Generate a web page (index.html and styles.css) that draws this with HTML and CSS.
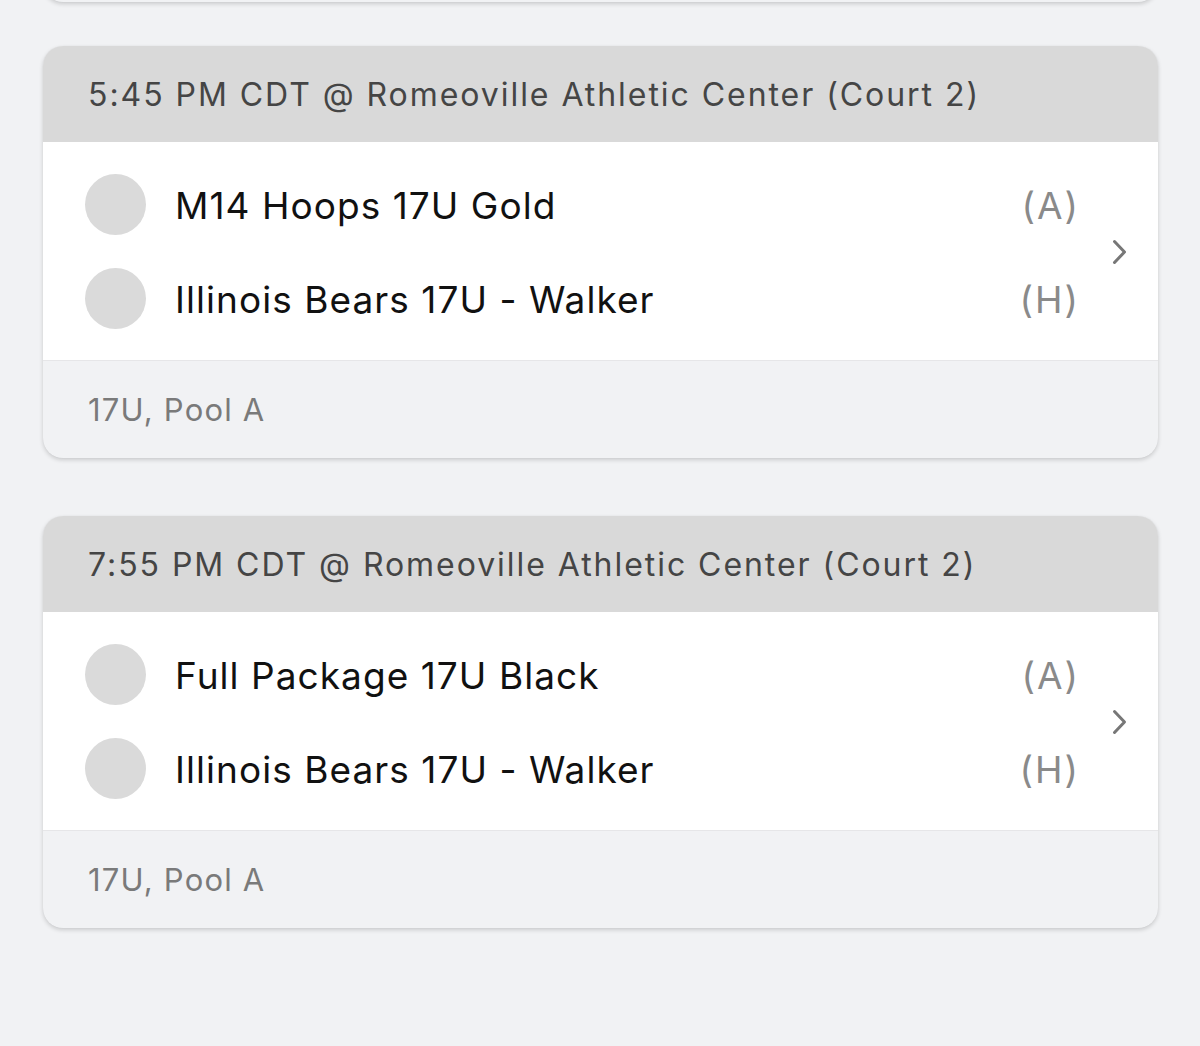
FILE: index.html
```html
<!DOCTYPE html>
<html>
<head>
<meta charset="utf-8">
<link rel="stylesheet" href="styles.css">
</head>
<body>
<div class="list">
  <div class="card card-prev"></div>

  <div class="card">
    <div class="card-head">5:45 PM CDT @ Romeoville Athletic Center (Court 2)</div>
    <div class="card-body">
      <div class="teams">
        <div class="team"><span class="logo"></span><span class="name">M14 Hoops 17U Gold</span><span class="side">(A)</span></div>
        <div class="team"><span class="logo"></span><span class="name">Illinois Bears 17U - Walker</span><span class="side">(H)</span></div>
      </div>
      <div class="chev"><svg width="18" height="26" viewBox="0 0 18 26"><path d="M3.5 2.5 L13.5 13 L3.5 23.5" fill="none" stroke="#777" stroke-width="3" stroke-linecap="round" stroke-linejoin="round"/></svg></div>
    </div>
    <div class="card-foot">17U, Pool A</div>
  </div>

  <div class="card">
    <div class="card-head">7:55 PM CDT @ Romeoville Athletic Center (Court 2)</div>
    <div class="card-body">
      <div class="teams">
        <div class="team"><span class="logo"></span><span class="name">Full Package 17U Black</span><span class="side">(A)</span></div>
        <div class="team"><span class="logo"></span><span class="name">Illinois Bears 17U - Walker</span><span class="side">(H)</span></div>
      </div>
      <div class="chev"><svg width="18" height="26" viewBox="0 0 18 26"><path d="M3.5 2.5 L13.5 13 L3.5 23.5" fill="none" stroke="#777" stroke-width="3" stroke-linecap="round" stroke-linejoin="round"/></svg></div>
    </div>
    <div class="card-foot">17U, Pool A</div>
  </div>
</div>
</body>
</html>
```
FILE: styles.css
```css
html, body {
  margin: 0;
  padding: 0;
  background: #f1f2f4;
  font-family: "Inter", "Open Sans", "Liberation Sans", sans-serif;
}
.list {
  padding: 0 42px 100px 43px;
  display: flex;
  flex-direction: column;
  gap: 58px;
}
.card {
  border-radius: 20px;
  overflow: hidden;
  background: #f1f2f4;
  box-shadow: 0 2px 4px rgba(0, 0, 0, 0.16), 0 0 1px rgba(0, 0, 0, 0.08);
}
.card-prev {
  height: 200px;
  margin-top: -198px;
  margin-bottom: -14px;
}
.card-head {
  background: #d9d9d9;
  height: 96px;
  display: flex;
  align-items: center;
  padding-left: 45px;
  padding-top: 1px;
  box-sizing: border-box;
  font-size: 32px;
  color: #454545;
  letter-spacing: 1.95px;
}
.card-body {
  background: #fff;
  height: 219px;
  box-sizing: border-box;
  padding: 16px 0 15px 42px;
  display: flex;
  border-bottom: 1px solid #e6e6e8;
}
.teams {
  flex: 1;
  display: flex;
  flex-direction: column;
}
.team {
  height: 94px;
  display: flex;
  align-items: center;
}
.logo {
  width: 61px;
  height: 61px;
  border-radius: 50%;
  background: #dadada;
  flex: none;
}
.name {
  margin-left: 29px;
  flex: 1;
  font-size: 37px;
  color: #111;
  letter-spacing: 1.05px;
  padding-top: 2px;
}
.side {
  font-size: 37px;
  color: #8a8a8a;
  letter-spacing: 2px;
  margin-right: -2px;
  padding-top: 2px;
}
.chev {
  width: 80px;
  display: flex;
  align-items: center;
  justify-content: center;
  padding-left: 4px;
  box-sizing: border-box;
}
.card-foot {
  height: 97px;
  display: flex;
  align-items: center;
  padding-left: 45px;
  font-size: 31px;
  color: #7a7a7a;
  letter-spacing: 1.2px;
}
```
